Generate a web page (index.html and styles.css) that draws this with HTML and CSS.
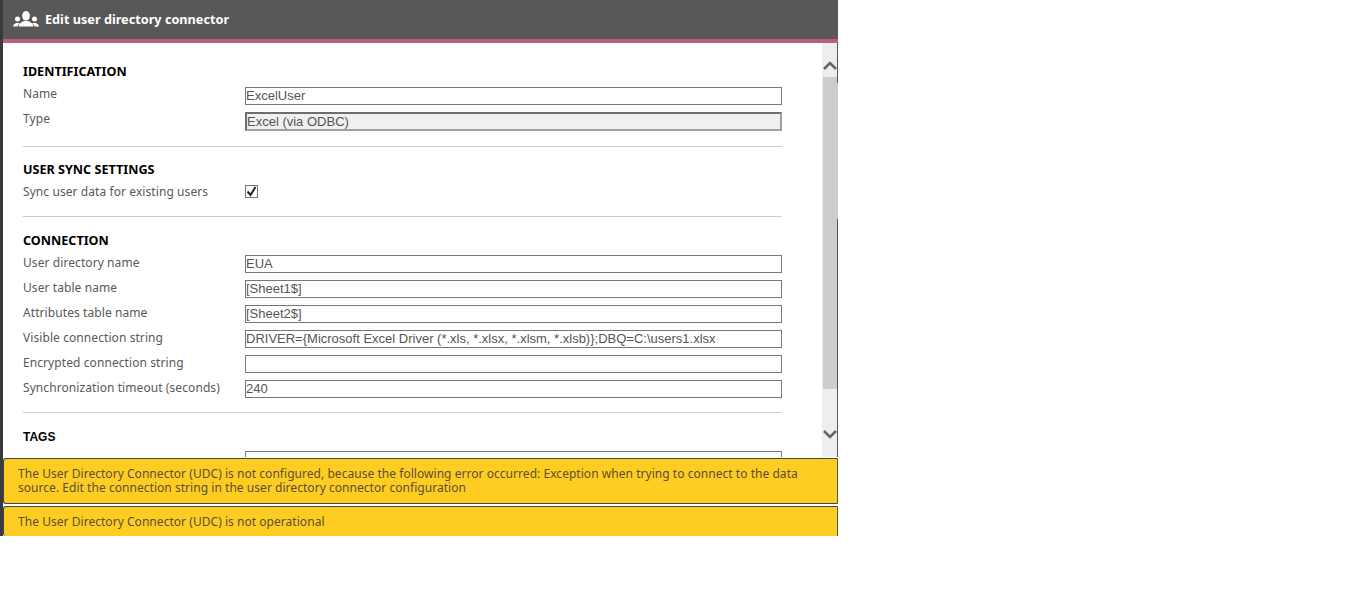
FILE: index.html
```html
<!DOCTYPE html>
<html lang="en">
<head>
<meta charset="utf-8">
<title>Edit user directory connector</title>
<link rel="stylesheet" href="styles.css">
</head>
<body>
<div class="app">
  <header class="header">
    <svg class="header-icon" viewBox="0 0 26 16" width="26" height="16" aria-hidden="true">
      <ellipse cx="13" cy="4.800" rx="3.900" ry="4.800" fill="#fff"/>
      <path d="M5.500 15.500c.2-2.800 2.500-3.900 5.300-5.400h4.400c2.800 1.500 5.100 2.600 5.300 5.400z" fill="#fff"/>
      <circle cx="4.500" cy="8" r="2.500" fill="#fff"/>
      <path d="M0 15.500c.2-1.900 1.500-3 3.600-3.500h2.100l1.300.6c-1.300.8-2.200 1.700-2.500 2.900z" fill="#fff"/>
      <circle cx="21.500" cy="8" r="2.500" fill="#fff"/>
      <path d="M26 15.500c-.2-1.900-1.500-3-3.600-3.500h-2.100l-1.300.6c1.300.8 2.200 1.700 2.500 2.900z" fill="#fff"/>
    </svg>
    <h1 class="title">Edit user directory connector</h1>
  </header>
  <div class="main">
    <div class="content">
      <section class="section sec-id">
        <h2 class="heading">IDENTIFICATION</h2>
        <div class="row"><label class="label">Name</label><div class="input">ExcelUser</div></div>
        <div class="row row-type"><label class="label">Type</label><div class="input input-disabled">Excel (via ODBC)</div></div>
      </section>
      <section class="section sec-sync">
        <h2 class="heading">USER SYNC SETTINGS</h2>
        <div class="row row-check"><label class="label">Sync user data for existing users</label>
          <span class="check"><svg viewBox="0 0 13 13" width="13" height="13" aria-hidden="true"><path d="M2.500 6.500l3 3.500 5-8" fill="none" stroke="#222" stroke-width="2"/></svg></span>
        </div>
      </section>
      <section class="section sec-conn">
        <h2 class="heading">CONNECTION</h2>
        <div class="row"><label class="label">User directory name</label><div class="input">EUA</div></div>
        <div class="row"><label class="label">User table name</label><div class="input">[Sheet1$]</div></div>
        <div class="row"><label class="label">Attributes table name</label><div class="input">[Sheet2$]</div></div>
        <div class="row"><label class="label">Visible connection string</label><div class="input">DRIVER={Microsoft Excel Driver (*.xls, *.xlsx, *.xlsm, *.xlsb)};DBQ=C:\users1.xlsx</div></div>
        <div class="row"><label class="label">Encrypted connection string</label><div class="input"></div></div>
        <div class="row"><label class="label">Synchronization timeout (seconds)</label><div class="input">240</div></div>
      </section>
      <section class="section sec-tags">
        <h2 class="heading heading-tags">TAGS</h2>
        <div class="row"><div class="label"></div><div class="input"></div></div>
      </section>
    </div>
    <div class="scrollbar">
      <div class="arrow arrow-up"><svg viewBox="0 0 14 9" width="14" height="9" aria-hidden="true"><path d="M1 8l6-6 6 6" fill="none" stroke="#666" stroke-width="2.600"/></svg></div>
      <div class="thumb"></div>
      <div class="arrow arrow-down"><svg viewBox="0 0 14 9" width="14" height="9" aria-hidden="true"><path d="M1 1l6 6 6-6" fill="none" stroke="#666" stroke-width="2.600"/></svg></div>
    </div>
  </div>
  <div class="alerts">
    <div class="alert alert-first">The User Directory Connector (UDC) is not configured, because the following error occurred: Exception when trying to connect to the data source. Edit the connection string in the user directory connector configuration</div>
    <div class="alert alert-second">The User Directory Connector (UDC) is not operational</div>
  </div>
</div>
</body>
</html>
```
FILE: styles.css
```css
* { box-sizing: border-box; }
html, body { margin: 0; padding: 0; background: #fff; }
body { font-family: "Noto Sans", "Open Sans", sans-serif; height: 606px; overflow: hidden; }
.app {
  width: 838px;
  height: 536px;
  display: flex;
  flex-direction: column;
  border-left: 3px solid #3a3a3a;
  overflow: hidden;
}
.header {
  height: 43px;
  flex: none;
  background: #585858;
  border-bottom: 4px solid #c05c7c;
  display: flex;
  align-items: center;
  padding-left: 10px;
  gap: 6px;
}
.header-icon { flex: none; margin-bottom: 1px; }
.title { margin: 0 0 2px; font-size: 12.700px; font-weight: 700; color: #fff; line-height: 16px; }
.main { height: 414px; flex: none; display: flex; overflow: hidden; }
.content { width: 819px; flex: none; padding: 0 40px 0 20px; overflow: hidden; }
.section { border-bottom: 1px solid #ccc; }
.sec-id { padding-top: 21px; height: 104px; }
.sec-id .heading { margin-bottom: 7px; }
.sec-sync { padding-top: 15px; height: 70px; }
.sec-sync .heading { margin-bottom: 7px; }
.sec-conn { padding-top: 16px; height: 196px; }
.sec-conn .label { margin-top: 0; }
.sec-tags { padding-top: 16px; border-bottom: 0; }
.heading { margin: 0 0 6px; font-size: 12.600px; line-height: 16px; font-weight: 700; color: #000; }
.heading-tags { font-family: "Liberation Sans", sans-serif; font-size: 12px; }
.row { display: flex; align-items: flex-start; height: 25px; }
.row-type { height: 26px; }
.row-check { height: 18px; }
.label { width: 222px; flex: none; font-size: 12px; letter-spacing: 0.080px; line-height: 16px; color: #595959; margin-top: -1px; }
.input {
  flex: 1;
  height: 18px;
  border: 1px solid #767676;
  font-family: "Liberation Sans", sans-serif;
  font-size: 13px;
  line-height: 16px;
  color: #555;
  padding-left: 0;
  background: #fff;
  white-space: nowrap;
  overflow: hidden;
}
.input-disabled {
  height: 19px;
  border: 2px solid;
  border-color: #6e6e6e #a0a0a0 #a0a0a0 #6e6e6e;
  background: #f0f0f0;
  line-height: 15px;
}
.check {
  width: 13px;
  height: 13px;
  border: 1px solid #767676;
  display: block;
  line-height: 0;
  overflow: hidden;
}
.check svg { margin: -1px; }
.scrollbar {
  width: 16px;
  flex: none;
  background: #eee;
  display: flex;
  flex-direction: column;
  position: relative;
}
.scrollbar::before, .scrollbar::after {
  content: "";
  position: absolute;
  right: 0;
  width: 1px;
  background: #555;
}
.scrollbar::before { top: 0; height: 40px; }
.scrollbar::after { top: 176px; bottom: 0; }
.arrow { height: 34px; flex: none; display: flex; justify-content: center; align-items: flex-end; padding-bottom: 7px; }
.arrow-down { height: 68px; align-items: flex-start; padding-top: 41px; padding-bottom: 0; }
.thumb { height: 312px; flex: none; background: #ccc; margin-left: 1px; }
.alerts { flex: 1; display: flex; flex-direction: column; gap: 2px; padding-top: 1px; }
.alert {
  background: #ffcc22;
  border: 1px solid #3f4650;
  border-right-color: #555;
  border-radius: 3px 0 0 3px;
  color: #5a5030;
  font-size: 12px;
  letter-spacing: 0.040px;
  line-height: 14px;
  padding: 0 20px 0 14px;
}
.alert-first { height: 46px; padding-top: 8px; flex: none; }
.alert-second { flex: 1; border-bottom: 0; padding-top: 8px; }
```
